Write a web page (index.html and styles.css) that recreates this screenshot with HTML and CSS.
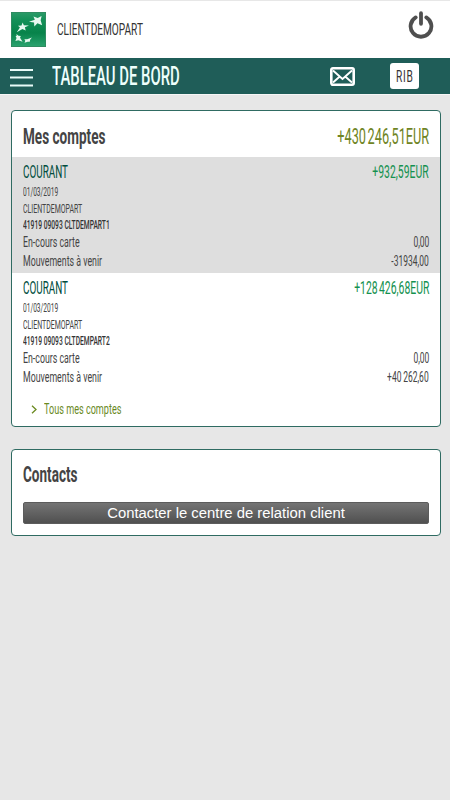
FILE: index.html
```
<!DOCTYPE html>
<html lang="fr">
<head>
    <meta charset="UTF-8" />
    <meta name="viewport" content="width=device-width, initial-scale=1" />
    <title>Tableau de bord</title>
    <link rel="stylesheet" href="styles.css">
</head>
<body>
    <header class="top">
        <svg class="logo" viewBox="0 0 36 36">
            <defs>
                <linearGradient id="green" x1="0" y1="0" x2="0" y2="1">
                    <stop offset="0" stop-color="#2b9a68"/>
                    <stop offset="0.22" stop-color="#149058"/>
                    <stop offset="0.6" stop-color="#07834a"/>
                    <stop offset="1" stop-color="#2ba36f"/>
                </linearGradient>
            </defs>
            <rect x="0.5" y="0.5" width="35" height="35" fill="url(#green)" stroke="#2d8a5f"/>
            <g fill="#e9f8f0">
                <path d="M31.500 4l-1 4.500 1.500 5-4.800-2-3.200 3.500-.3-4.200-5.200-.8 6-2-1.400-3.300 4.400 1.400z"/>
                <path d="M12 10.800l1.200 2.700 5.300.3-4.200 2 .8 3.200-3.400-1.400-5.700 3.200 3.200-4.900-2-1.800 3.600-.2z"/>
                <path d="M5.500 22.500l2.200 2 2.400.3-.8 1.800 2.600 4-4.400-1.500-3 .6 1.200-3-1-2 1.300-.2z"/>
                <path d="M21.500 26.300l-1.800 2.200-.4 2-2.200.2-3.200.8.8-2-1-1.600 3 .2z"/>
            </g>
        </svg>
        <span class="client"><span class="txt">CLIENTDEMOPART</span></span>
        <svg class="power" viewBox="0 0 26 28" fill="none" stroke="#4f4f4f" stroke-width="3.800" stroke-linecap="round">
            <path d="M7.700 6.400A10.400 10.400 0 1 0 18.300 6.400"/>
            <path d="M13 2.200v10.600"/>
        </svg>
    </header>
    <nav class="bar">
        <svg class="menu" viewBox="0 0 23 20" fill="none" stroke="#e8fbf8" stroke-width="2.200">
            <path d="M0 2h23M0 9.500h23M0 17.500h23"/>
        </svg>
        <h1><span class="txt">TABLEAU DE BORD</span></h1>
        <svg class="mail" viewBox="0 0 25 19">
            <rect x="1.300" y="1.300" width="22.400" height="16.400" rx="1.600" fill="#1f5d58" stroke="#fff" stroke-width="2.600"/>
            <path d="M3 3.500l9.500 8.500 9.500-8.500M3 15.500l6.200-5.500M22 15.500l-6.200-5.500" fill="none" stroke="#fff" stroke-width="1.900"/>
        </svg>
        <a class="rib"><span class="txt">RIB</span></a>
    </nav>
    <main>
        <section class="card accounts">
            <div class="card-head">
                <h2><span class="txt">Mes comptes</span></h2>
                <span class="total"><span class="txt">+430&thinsp;246,51EUR</span></span>
            </div>
            <div class="account grey">
                <div class="row title"><span class="txt">COURANT</span><span class="txt amount">+932,59EUR</span></div>
                <div class="row small"><span class="txt date">01/03/2019</span></div>
                <div class="row small"><span class="txt">CLIENTDEMOPART</span></div>
                <div class="row number"><span class="txt">41919 09093 CLTDEMPART1</span></div>
                <div class="row line"><span class="txt">En-cours carte</span><span class="txt amount">0,00</span></div>
                <div class="row line"><span class="txt">Mouvements à venir</span><span class="txt amount">-31934,00</span></div>
            </div>
            <div class="account">
                <div class="row title"><span class="txt">COURANT</span><span class="txt amount">+128&thinsp;426,68EUR</span></div>
                <div class="row small"><span class="txt date">01/03/2019</span></div>
                <div class="row small"><span class="txt">CLIENTDEMOPART</span></div>
                <div class="row number"><span class="txt">41919 09093 CLTDEMPART2</span></div>
                <div class="row line"><span class="txt">En-cours carte</span><span class="txt amount">0,00</span></div>
                <div class="row line"><span class="txt">Mouvements à venir</span><span class="txt amount">+40&thinsp;262,60</span></div>
            </div>
            <a class="all">
                <svg class="chevron" viewBox="0 0 6 9" fill="none" stroke="#6a8a1f" stroke-width="1.300"><path d="M1 .8l4 3.700-4 3.700"/></svg>
                <span class="txt">Tous mes comptes</span>
            </a>
        </section>
        <section class="card contacts">
            <h2><span class="txt">Contacts</span></h2>
            <button>Contacter le centre de relation client</button>
        </section>
    </main>
</body>
</html>
```
FILE: styles.css
```
*{
    padding: 0;
    margin: 0;
    box-sizing: border-box;
}
body{
    background-color: #e7e7e7;
    font-family: Roboto, "Liberation Sans", sans-serif;
    color: #444;
    min-height: 800px;
}
/* condensed lettering */
.txt{
    display: inline-block;
    white-space: nowrap;
    transform: scaleX(0.6);
    transform-origin: 0 50%;
}
.top{
    height: 58px;
    background-color: #fff;
    border-top: 1px solid #e7e7e7;
    display: flex;
    align-items: center;
    padding: 0 16px 0 11px;
}
.logo{
    width: 35px;
    height: 35px;
}
.client{
    flex: 1;
    margin: -2px 0 0 11px;
    font-size: 17px;
    color: #333;
}
.client .txt{
    transform: scaleX(0.595);
}
.power{
    width: 26px;
    height: 28px;
    margin-top: -9px;
}
.bar{
    height: 36px;
    background-color: #1f5d58;
    display: flex;
    align-items: center;
    padding: 0 31px 0 10px;
    box-shadow: 0 1px 0 #f6f6f6;
}
.menu{
    width: 23px;
    height: 20px;
    margin-top: 3px;
}
h1{
    flex: 1;
    margin-left: 19px;
    font-size: 25px;
    line-height: 37px;
    font-weight: 500;
    color: #eefffc;
}
h1 .txt{
    transform: scaleX(0.595);
}
.mail{
    width: 25px;
    height: 19px;
    margin-right: 35px;
}
.rib{
    width: 29px;
    height: 26px;
    border-radius: 3px;
    background-color: #fff;
    color: #333;
    font-size: 17px;
    line-height: 27px;
    padding-left: 6px;
}
.rib .txt{
    transform: scaleX(0.6);
    letter-spacing: 1.2px;
}
main{
    padding: 16px 9px 0 11px;
}
.card{
    background-color: #fff;
    border: 1px solid #2f6b62;
    border-radius: 4px;
    margin-bottom: 22px;
}
.card-head{
    height: 46px;
    padding: 6px 11px 0;
    display: flex;
    justify-content: space-between;
    align-items: center;
}
h2{
    font-size: 21.5px;
    line-height: 30px;
    font-weight: 700;
    color: #444;
}
h2 .txt{
    transform: scaleX(0.63);
}
.total{
    font-size: 21.5px;
    line-height: 26px;
    color: #6f8424;
}
.total .txt{
    transform: scaleX(0.592);
}
.total .txt,
.txt.amount{
    transform-origin: 100% 50%;
}
.account{
    height: 116px;
    padding: 4px 11px 0;
}
.account.grey{
    background-color: #dedede;
}
.row{
    display: flex;
    justify-content: space-between;
}
.title{
    font-size: 17.5px;
    line-height: 23px;
    color: #004d3d;
}
.title .txt{
    transform: scaleX(0.565);
}
.title .amount{
    color: #14914f;
    transform: scaleX(0.595);
}
.small{
    font-size: 12px;
    line-height: 17px;
}
.small .txt{
    transform: scaleX(0.58);
}
.small .date{
    transform: scaleX(0.55);
}
.number{
    font-size: 12px;
    line-height: 15px;
    font-weight: 500;
    color: #333;
}
.number .txt{
    transform: scaleX(0.558);
}
.line{
    font-size: 14px;
    line-height: 18.5px;
}
.line .txt{
    transform: scaleX(0.628);
}
.line .amount{
    transform: scaleX(0.605);
}
.all{
    height: 37px;
    display: flex;
    align-items: center;
    padding: 3px 0 0 19px;
    font-size: 14px;
    color: #6a8a1f;
}
.all .txt{
    transform: scaleX(0.65);
}
.chevron{
    width: 6px;
    height: 9px;
    margin-right: 7px;
}
.contacts{
    height: 87px;
    padding: 10px 11px 0;
}
button{
    display: block;
    width: 100%;
    height: 22px;
    margin-top: 12px;
    border: 1px solid #5c5c5c;
    border-radius: 2px;
    background: linear-gradient(#747474, #505050);
    color: #fff;
    font-family: "Liberation Sans", sans-serif;
    font-size: 14.85px;
    line-height: 20px;
}
```
